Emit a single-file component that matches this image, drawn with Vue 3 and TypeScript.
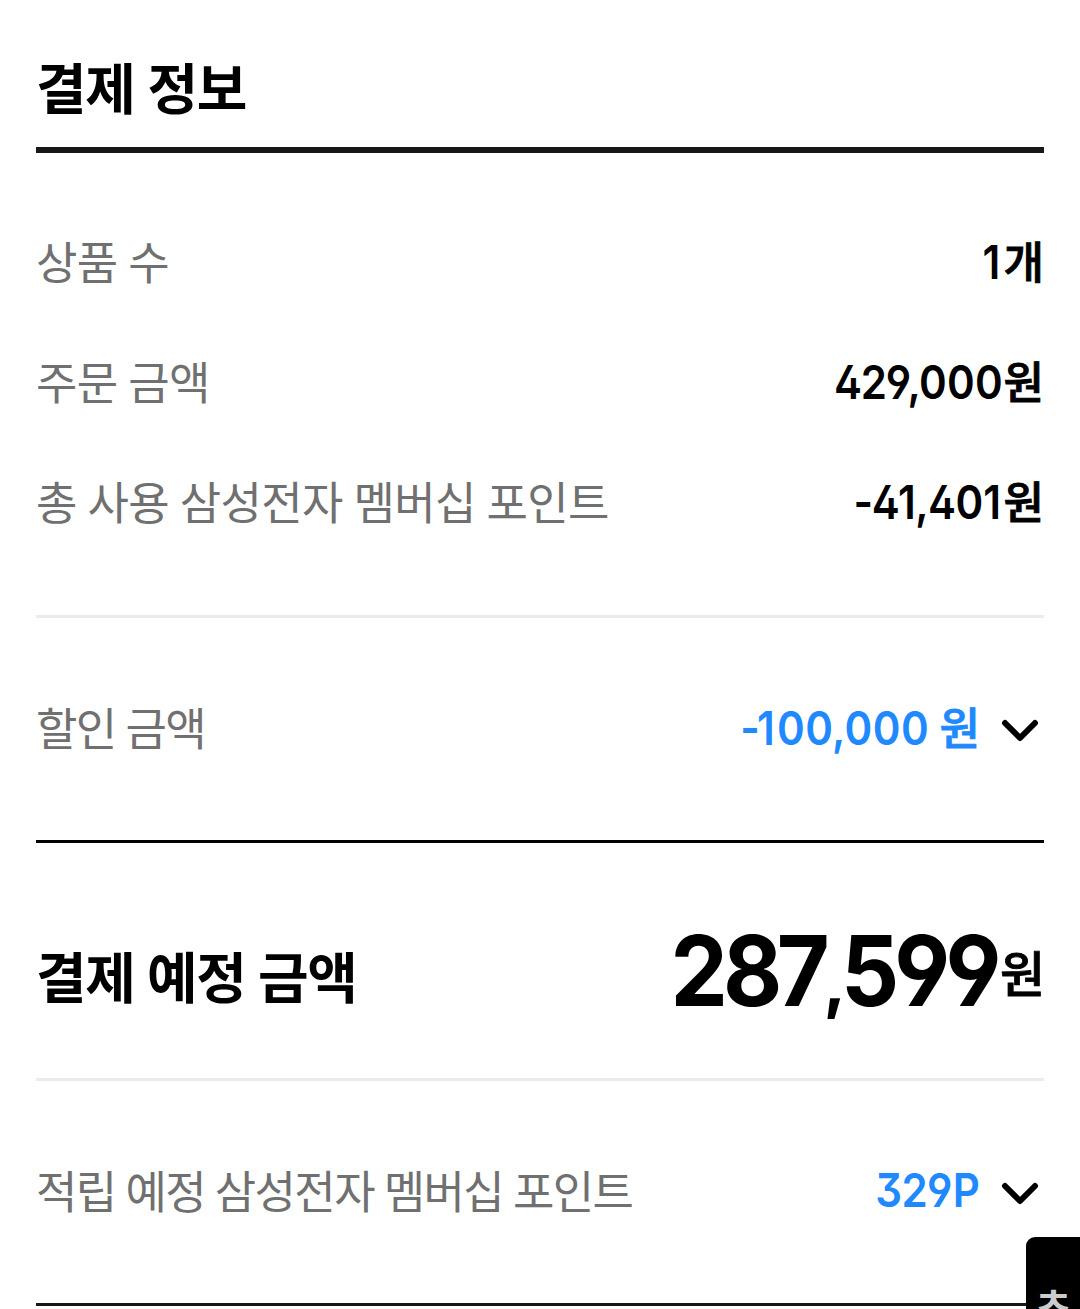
<script setup lang="ts">
interface Run {
  text: string
  spacing: number
}

interface Row {
  label: string
  amount: Run[]
  unit: string
}

const rows: Row[] = [
  { label: '상품 수', amount: [{ text: '1', spacing: 3.2 }], unit: '개' },
  {
    label: '주문 금액',
    amount: [
      { text: '42', spacing: -1.3 },
      { text: '9', spacing: -4.2 },
      { text: ',', spacing: -2 },
      { text: '00', spacing: 0.3 },
      { text: '0', spacing: 0.5 },
    ],
    unit: '원',
  },
  {
    label: '총 사용 삼성전자 멤버십 포인트',
    amount: [
      { text: '-', spacing: -1.6 },
      { text: '41,4', spacing: -0.6 },
      { text: '0', spacing: 0 },
      { text: '1', spacing: 3 },
    ],
    unit: '원',
  },
]

const discount: Run[] = [
  { text: '-', spacing: -3 },
  { text: '1', spacing: 2.3 },
  { text: '0', spacing: 0.6 },
  { text: '0', spacing: -1.2 },
  { text: ',', spacing: -0.8 },
  { text: '00', spacing: 0.5 },
  { text: '0', spacing: 0.7 },
]

const points: Run[] = [
  { text: '32', spacing: -0.7 },
  { text: '9', spacing: 0.4 },
  { text: 'P', spacing: 0 },
]
</script>

<template>
  <main class="page">
    <h2 class="title">결제 정보</h2>

    <section class="summary">
      <div v-for="row in rows" :key="row.label" class="row">
        <span class="label">{{ row.label }}</span>
        <span class="value"><span class="num"><span v-for="(run, i) in row.amount" :key="i" :style="{ letterSpacing: run.spacing + 'px' }">{{ run.text }}</span></span><span class="unit">{{ row.unit }}</span></span>
      </div>
    </section>

    <section class="fold discount">
      <span class="label tight">할인 금액</span>
      <span class="value blue"><span class="num"><span v-for="(run, i) in discount" :key="i" :style="{ letterSpacing: run.spacing + 'px' }">{{ run.text }}</span></span><span class="unit spaced">원</span></span>
      <svg class="chevron" viewBox="0 0 48 48" width="48" height="48"><path d="M9 18 24 33 39 18" /></svg>
    </section>

    <section class="total">
      <span class="total-label">결제 예정 금액</span>
      <span class="total-value"><span class="total-num">2<span class="narrow">87</span><span class="comma">,</span>599</span><span class="total-unit">원</span></span>
    </section>

    <section class="fold points">
      <span class="label tight">적립 예정 삼성전자 멤버십 포인트</span>
      <span class="value blue"><span class="num"><span v-for="(run, i) in points" :key="i" :style="{ letterSpacing: run.spacing + 'px' }">{{ run.text }}</span></span></span>
      <svg class="chevron" viewBox="0 0 48 48" width="48" height="48"><path d="M9 18 24 33 39 18" /></svg>
    </section>

    <aside class="floating"><span>초</span></aside>
  </main>
</template>

<style>
body {
  margin: 0;
  background: #fff;
}
</style>

<style scoped>
.page {
  position: relative;
  box-sizing: border-box;
  width: 1080px;
  height: 1309px;
  padding: 0 36px;
  overflow: hidden;
  background: #fff;
  color: #000;
  font-family: 'Noto Sans CJK KR', sans-serif;
  white-space: nowrap;
}

.title {
  box-sizing: border-box;
  height: 153px;
  margin: 0;
  padding-top: 45px;
  border-bottom: 6px solid #18181a;
  font-size: 55px;
  font-weight: 700;
  line-height: 80px;
  letter-spacing: -1.4px;
  word-spacing: 2px;
}

.summary {
  box-sizing: border-box;
  height: 465px;
  padding-top: 50px;
  border-bottom: 3px solid #ebebeb;
}

.row,
.fold,
.total {
  display: flex;
  align-items: center;
  justify-content: space-between;
}

.row {
  height: 120px;
}

.label {
  padding-bottom: 4px;
  color: #707070;
  font-size: 45px;
  line-height: 66px;
  letter-spacing: -0.7px;
  word-spacing: 1.5px;
}

.label.tight {
  letter-spacing: -1.6px;
  word-spacing: 1.3px;
}

.value {
  display: flex;
  align-items: baseline;
  padding-bottom: 4px;
  font-weight: 500;
  line-height: 66px;
}

.num {
  font-family: Inter, sans-serif;
  font-size: 47px;
  font-weight: 630;
  font-feature-settings: 'ss01', 'cv03', 'cv09', 'calt' 0;
  transform: scaleX(0.895);
  transform-origin: right;
}

.unit {
  font-size: 44px;
  -webkit-text-stroke: 0.9px currentColor;
}

.spaced {
  margin-left: 10px;
}

.blue {
  margin-left: auto;
  color: #2189ff;
}

.chevron {
  margin-left: 16px;
  fill: none;
  stroke: #000;
  stroke-width: 6;
  stroke-linecap: round;
  stroke-linejoin: round;
}

.fold {
  box-sizing: border-box;
  height: 225px;
}

.discount {
  border-bottom: 3px solid #000;
}

.points {
  border-bottom: 3px solid #18181a;
}

.total {
  box-sizing: border-box;
  height: 238px;
  padding-top: 19px;
  border-bottom: 3px solid #ebebeb;
}

.total-label {
  padding-top: 7px;
  font-size: 55px;
  font-weight: 700;
  letter-spacing: -1.4px;
  word-spacing: 1.5px;
}

.total-value {
  display: flex;
  align-items: baseline;
}

.total-num {
  margin-right: 3px;
  font-family: Inter, sans-serif;
  font-size: 98px;
  font-weight: 700;
  font-feature-settings: 'ss01', 'cv03', 'cv09', 'calt' 0;
  letter-spacing: -5.2px;
  transform: scaleX(0.93);
  transform-origin: right;
}

.narrow {
  letter-spacing: -6.2px;
}

.comma {
  font-size: 66px;
  font-weight: 800;
  letter-spacing: -5px;
}

.total-unit {
  position: relative;
  top: -14px;
  margin-right: -1px;
  font-size: 49px;
  font-weight: 500;
  -webkit-text-stroke: 0.8px currentColor;
}

.floating {
  position: absolute;
  top: 1237px;
  left: 1026px;
  width: 54px;
  height: 72px;
  overflow: hidden;
  border-radius: 9px 0 0 0;
  background: #000;
  color: #ccc;
  font-size: 38px;
  font-weight: 700;
  line-height: 54px;
}

.floating span {
  display: block;
  padding: 41px 0 0 10px;
}
</style>
